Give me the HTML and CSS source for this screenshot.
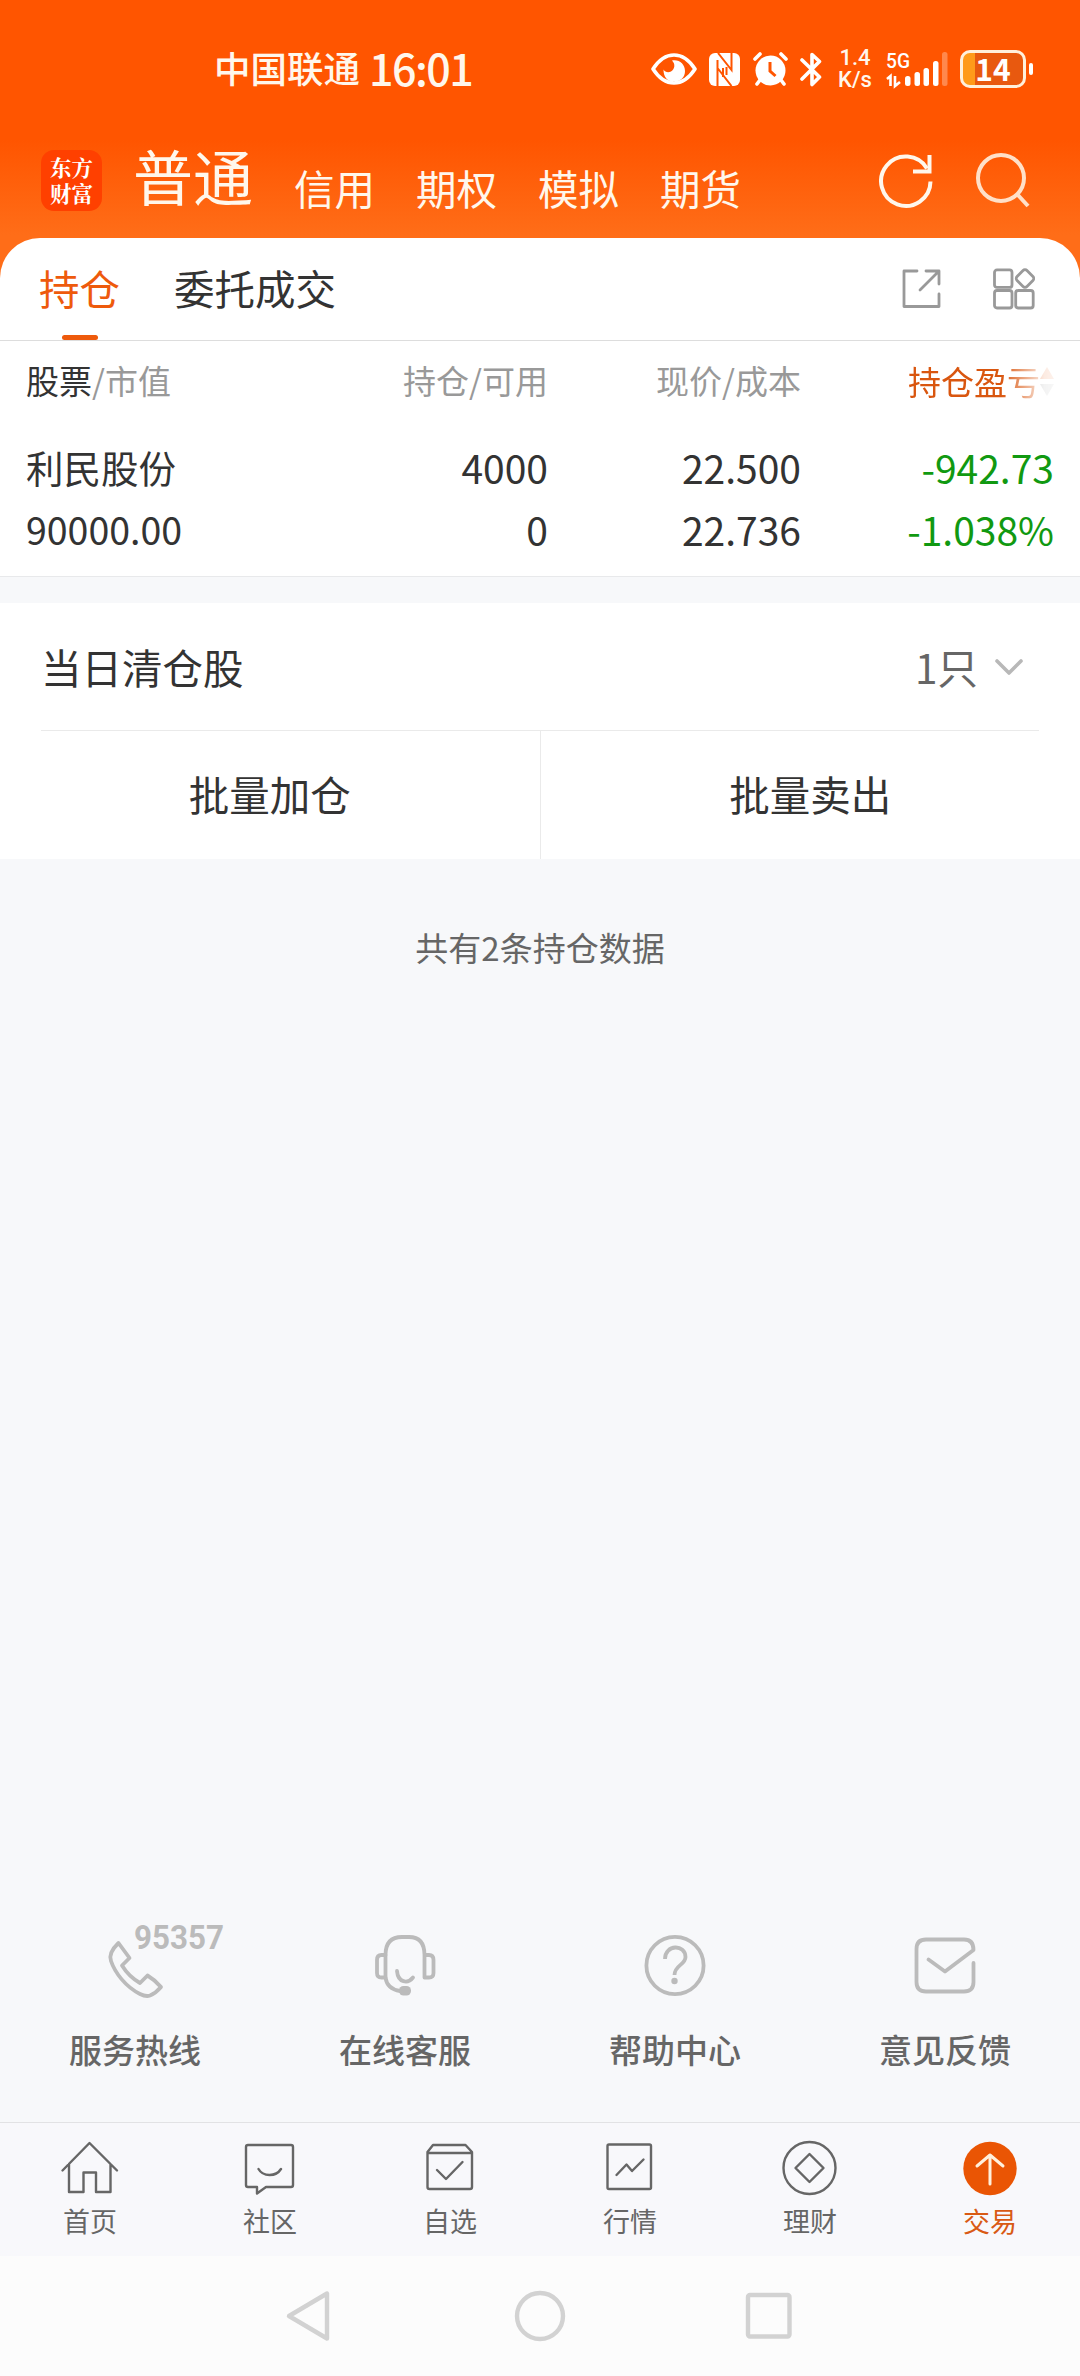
FILE: index.html
```
<!DOCTYPE html>
<html lang="zh-CN">
<head>
  <meta charset="UTF-8">
  <meta name="viewport" content="width=device-width, initial-scale=1">
  <title>东方财富 - 交易</title>
  <link rel="stylesheet" href="styles.css">
</head>
<body>
<div class="app">

  <header class="top">
    <div class="statusbar">
      <span class="carrier">中国联通</span>
      <span class="time">16:01</span>
      <div class="status-icons">
        <svg class="eye" width="46" height="32" viewBox="0 0 46 32">
          <path d="M2 16Q11 2 23 2T44 16Q35 30 23 30T2 16Z" fill="none" stroke="#fff" stroke-width="3.6" stroke-linejoin="round"/>
          <path d="M21 7.500C28 6 34 11 34 18C34 24 30 28.500 23 28.500S12.500 24 12.500 16.500C14 19 17 20 20 18.500C24 16 24.500 11 21 7.500Z" fill="#fff"/>
        </svg>
        <svg class="nfc" width="31" height="33" viewBox="0 0 31 33">
          <rect width="31" height="33" rx="6" fill="#fff"/>
          <path d="M9 0L22.500 17V0M8.500 33V7M8.500 15L22.500 33M14 15V24M17.500 14V22" fill="none" stroke="#ff5500" stroke-width="2"/>
        </svg>
        <svg class="alarm" width="35" height="34" viewBox="0 0 35 34">
          <circle cx="17.500" cy="18.500" r="15" fill="#fff"/>
          <path d="M2 7L7 2M33 7L28 2M7 28L4 32M28 28L31 32" stroke="#fff" stroke-width="3.600" stroke-linecap="round"/>
          <path d="M17 10V19L22.500 24" fill="none" stroke="#ff5500" stroke-width="3"/>
        </svg>
        <svg class="bt" width="22" height="35" viewBox="0 0 22 35">
          <path d="M2 8L19.500 25L12 32.500V2.500L19.500 9.500L2 27" fill="none" stroke="#fff" stroke-width="3.600" stroke-linejoin="round" stroke-linecap="round"/>
        </svg>
        <div class="speed"><span>1.4</span><span>K/s</span></div>
        <svg class="signal" width="62" height="38" viewBox="0 0 62 38">
          <text x="0" y="18" class="net" textLength="24" lengthAdjust="spacingAndGlyphs">5G</text>
          <path d="M1 29L4.500 26V36M9 26V36L14 32" fill="none" stroke="#fff" stroke-width="2.600"/>
          <g fill="#fff">
            <rect x="19" y="26" width="5.500" height="10" rx="2.500"/>
            <rect x="28.500" y="22" width="5.500" height="14" rx="2.500"/>
            <rect x="37.500" y="18" width="5.500" height="18" rx="2.500"/>
            <rect x="47" y="11" width="5.500" height="25" rx="2.500"/>
            <rect x="56" y="2" width="5.500" height="34" rx="2.500" opacity=".3"/>
          </g>
        </svg>
        <div class="battery"><span>14</span></div>
        <i class="battery-tip"></i>
      </div>
    </div>

    <nav class="accounts">
      <div class="logo"><span>东方</span><span>财富</span></div>
      <span class="account current">普通</span>
      <span class="account">信用</span>
      <span class="account">期权</span>
      <span class="account">模拟</span>
      <span class="account">期货</span>
      <svg class="refresh" width="54" height="56" viewBox="0 0 54 56" fill="none" stroke="#fff7ec" stroke-width="4">
        <path d="M51.500 28.500A24.700 24.700 0 1 1 48 15.500"/>
        <path d="M50.500 2V18.500H34"/>
      </svg>
      <svg class="search" width="54" height="56" viewBox="0 0 54 56" fill="none" stroke="#ffe0c8" stroke-width="4">
        <circle cx="25" cy="25" r="23"/>
        <path d="M41 41L52 53"/>
      </svg>
    </nav>
  </header>

  <main class="content">
    <section class="panel">
      <div class="tabs">
        <span class="tab active">持仓</span>
        <span class="tab">委托成交</span>
        <svg class="share" width="40" height="40" viewBox="0 0 40 40" fill="none" stroke="#999" stroke-width="2.800" stroke-linecap="round" stroke-linejoin="round">
          <path d="M15 2H2V37.500H37V25"/>
          <path d="M24 2H37V15M37 2L18 21"/>
        </svg>
        <svg class="grid" width="42" height="42" viewBox="0 0 42 42" fill="none" stroke="#999" stroke-width="2.800">
          <rect x="1.500" y="1.900" width="17.500" height="17.500" rx="2.500"/>
          <rect x="1.500" y="22.500" width="17.500" height="17.500" rx="2.500"/>
          <rect x="22.700" y="22.500" width="17.500" height="17.500" rx="2.500"/>
          <rect x="25" y="3.500" width="14" height="14" rx="2.800" transform="rotate(45 32 10.500)"/>
        </svg>
      </div>

      <div class="thead">
        <span><b>股票</b>/市值</span>
        <span>持仓/可用</span>
        <span>现价/成本</span>
        <span class="sorted">持仓盈亏<svg width="14" height="32" viewBox="0 0 14 32"><path d="M0 14L7 2L14 14Z" fill="#e8550a"/><path d="M0 19L7 31L14 19Z" fill="#999"/></svg></span>
      </div>
      <div class="row">
        <div class="name">利民股份</div>
        <div>4000</div>
        <div>22.500</div>
        <div class="down">-942.73</div>
        <div class="value">90000.00</div>
        <div>0</div>
        <div>22.736</div>
        <div class="down">-1.038%</div>
      </div>
    </section>

    <section class="closed">
      <div class="closed-head">
        <span>当日清仓股</span>
        <span class="count">1只</span>
        <svg width="28" height="16" viewBox="0 0 28 16" fill="none" stroke="#b8b8b8" stroke-width="3.600" stroke-linecap="round" stroke-linejoin="round">
          <path d="M2 2L14 14L26 2"/>
        </svg>
      </div>
      <div class="batch">
        <span>批量加仓</span>
        <span>批量卖出</span>
      </div>
    </section>

    <p class="summary">共有2条持仓数据</p>

    <div class="services">
      <div class="service">
        <svg width="120" height="76" viewBox="0 0 120 76" fill="none" stroke="#bbb" stroke-width="3.800" stroke-linejoin="round">
          <path d="M43.500 19L54.500 34L47 41.500C51 48 58 55 65 59L72.500 51.500Q80 56 86 63Q81 69 75 71.500Q71 73 65 70C51 63 40 49 36 37Q33 29 43.500 19Z"/>
          <text x="59" y="25" class="hotline" textLength="90" lengthAdjust="spacingAndGlyphs">95357</text>
        </svg>
        <span>服务热线</span>
      </div>
      <div class="service">
        <svg width="120" height="76" viewBox="0 0 120 76" fill="none" stroke="#bbb" stroke-width="3.800" stroke-linecap="round" stroke-linejoin="round">
          <path d="M40.500 53.500V31Q40.500 13 57 13H64Q79.500 13 79.500 31V53.500H84Q88.500 53.500 88.500 49V36Q88.500 31 84 31H79.500"/>
          <path d="M40.500 31H36.500Q32 31 32 36V49Q32 53.500 36.500 53.500H40.500Q42 65 55 67"/>
          <path d="M52 47C53 59 63 60 68 53.500"/>
          <rect x="54" y="62" width="12" height="9.500" rx="4.500" fill="#bbb" stroke="none"/>
        </svg>
        <span>在线客服</span>
      </div>
      <div class="service">
        <svg width="120" height="76" viewBox="0 0 120 76" fill="none" stroke="#bbb" stroke-width="3.800">
          <circle cx="60" cy="41.500" r="28.600"/>
          <path d="M50 35C50 20 70.500 20 70.500 33C70.500 41 59.500 41 59.500 51"/>
          <circle cx="59.500" cy="57" r="3.200" fill="#bbb" stroke="none"/>
        </svg>
        <span>帮助中心</span>
      </div>
      <div class="service">
        <svg width="120" height="76" viewBox="0 0 120 76" fill="none" stroke="#bbb" stroke-width="3.800" stroke-linecap="round" stroke-linejoin="round">
          <path d="M88.500 39V58Q88.500 67.500 79 67.500H41Q31.500 67.500 31.500 58V25Q31.500 15.500 41 15.500H79Q88.500 15.500 88.500 26L60 47.500L43.500 35.500"/>
        </svg>
        <span>意见反馈</span>
      </div>
    </div>
  </main>

  <nav class="tabbar">
    <div class="item">
      <svg width="60" height="60" viewBox="0 0 60 60"><path d="M2.500 31.500L29.500 4L57 31.500M9 25V53H23.500V33.500H36V53H50.500V25"/></svg>
      <span>首页</span>
    </div>
    <div class="item">
      <svg width="60" height="60" viewBox="0 0 60 60"><path d="M8 6H51Q53 6 53 8V46Q53 48 51 48H26L17 54.500V48H8Q6 48 6 46V8Q6 6 8 6ZM18.500 30C23 38 36 38 41 30"/></svg>
      <span>社区</span>
    </div>
    <div class="item">
      <svg width="60" height="60" viewBox="0 0 60 60"><path d="M7.500 13L13 6H45.500L52 13V48Q52 50 50 50H9.500Q7.500 50 7.500 48ZM7.500 14H52M17 31L26 40L42.500 23"/></svg>
      <span>自选</span>
    </div>
    <div class="item">
      <svg width="60" height="60" viewBox="0 0 60 60"><rect x="7.500" y="5.500" width="43.500" height="44.500" rx="1.500"/><path d="M16.500 36L26.500 25.500L32 32L43.500 20.500"/></svg>
      <span>行情</span>
    </div>
    <div class="item">
      <svg width="60" height="60" viewBox="0 0 60 60"><circle cx="29.500" cy="29" r="26"/><path d="M29.500 15L43.500 29L29.500 43L15.500 29Z"/></svg>
      <span>理财</span>
    </div>
    <div class="item active">
      <svg width="60" height="60" viewBox="0 0 60 60"><circle class="disc" cx="30" cy="29.500" r="26.700"/><path class="arrow" d="M30 45V16M17 27L30 16L43 27"/></svg>
      <span>交易</span>
    </div>
  </nav>

  <div class="sysnav">
    <svg width="52" height="52" viewBox="0 0 52 52"><path d="M4 26L42 3.500V48.500Z"/></svg>
    <svg width="52" height="52" viewBox="0 0 52 52"><circle cx="26" cy="26" r="23"/></svg>
    <svg width="52" height="52" viewBox="0 0 52 52"><rect x="5" y="5" width="41.500" height="41.500" rx="2"/></svg>
  </div>

</div>
</body>
</html>
```
FILE: styles.css
```
* {
  box-sizing: border-box;
}

body {
  margin: 0;
  background: #f7f8fa;
  color: #333;
  font-family: "Noto Sans CJK SC", "Noto Sans", sans-serif;
}

svg {
  display: block;
  flex: none;
}

.app {
  width: 1080px;
  height: 2376px;
  display: flex;
  flex-direction: column;
  overflow: hidden;
}

/* orange header, runs on behind the rounded panel corners */
.top {
  height: 288px;
  flex: none;
  background: linear-gradient(#ff5500 0, #ff5500 140px, #ff6d18 235px, #ff6d18 100%);
  color: #fff7ec;
}

.statusbar {
  height: 138px;
  display: flex;
  align-items: center;
  padding-left: 214px;
}

.carrier {
  font-size: 36.5px;
  font-weight: 500;
  line-height: 50px;
  margin-top: -3px;
}

.time {
  width: 112px;
  margin-left: 9px;
  margin-top: -4px;
  font-size: 43px;
  font-weight: 500;
  line-height: 50px;
  letter-spacing: -1.5px;
}

.status-icons {
  display: flex;
  align-items: center;
  margin-left: 170px;
}

.speed,
.battery,
.battery-tip {
  flex: none;
}

.nfc {
  margin-left: 12px;
}

.alarm {
  margin-left: 13px;
}

.bt {
  margin-left: 12px;
}

.speed {
  width: 38px;
  margin-left: 14px;
  display: flex;
  flex-direction: column;
  align-items: center;
  font-family: Roboto, sans-serif;
  font-size: 22px;
  font-weight: 500;
  line-height: 22px;
}

.signal {
  margin-left: 12px;
  overflow: visible;
}

.net {
  font-family: Roboto, sans-serif;
  font-size: 21px;
  font-weight: 500;
  fill: #fff;
}

.battery {
  width: 66px;
  height: 38px;
  margin-left: 12px;
  border: 3px solid #fff0dc;
  border-radius: 10px;
  background: linear-gradient(90deg, #ff9a1a 12px, #e8590f 12px);
  text-align: center;
  font-size: 30px;
  font-weight: 700;
  line-height: 30px;
  color: #fff;
}

.battery-tip {
  width: 4px;
  height: 12px;
  margin-left: 3px;
  border-radius: 2px;
  background: #fff;
}

.accounts {
  height: 100px;
  display: flex;
  align-items: flex-start;
  padding-left: 41px;
}

.logo {
  width: 61px;
  height: 61px;
  margin-top: 12px;
  padding-top: 4px;
  border-radius: 13px;
  background: #ff4000;
  color: #fff;
  display: flex;
  flex-direction: column;
  align-items: center;
  font-family: "Noto Serif CJK SC", "Noto Sans CJK SC", serif;
  font-size: 21.5px;
  font-weight: 700;
  line-height: 26px;
}

.account {
  margin-left: 41px;
  margin-top: 20px;
  font-size: 40.5px;
  line-height: 60px;
}

.account.current {
  margin-left: 31px;
  margin-top: 1px;
  font-size: 60px;
  line-height: 72px;
}

.refresh {
  margin-left: 138px;
  margin-top: 15px;
}

.search {
  margin-left: 43px;
  margin-top: 15px;
}

.content {
  flex: 1;
  display: flex;
  flex-direction: column;
  margin-top: -50px;
}

.panel {
  height: 339px;
  background: #fff;
  border-bottom: 1px solid #e8e9eb;
  border-radius: 40px 40px 0 0;
}

.tabs {
  height: 103px;
  display: flex;
  align-items: center;
  padding-left: 39px;
  border-bottom: 1px solid #ddd;
}

.tab {
  height: 102px;
  font-size: 40.5px;
  line-height: 99px;
}

.tab + .tab {
  margin-left: 54px;
}

.tab.active {
  color: #ee5a0c;
  display: flex;
  flex-direction: column;
  align-items: center;
}

.tab.active::after {
  content: "";
  width: 36px;
  height: 5px;
  margin-top: -2px;
  border-radius: 3px;
  background: #ee5a0c;
}

.share {
  margin-left: auto;
}

.grid {
  margin-left: 51px;
  margin-right: 45px;
}

.thead,
.row {
  display: grid;
  grid-template-columns: 1fr 253px 253px 253px;
  padding: 0 26px;
  text-align: right;
}

.thead {
  height: 90px;
  font-size: 33px;
  line-height: 79px;
  color: #999;
}

.thead b {
  font-weight: 400;
  color: #333;
}

.thead span:first-child {
  text-align: left;
}

.thead .sorted {
  display: flex;
  justify-content: flex-end;
  align-items: center;
  height: 80px;
  color: #d9560f;
  -webkit-mask-image: linear-gradient(90deg, #000 200px, rgba(0, 0, 0, .12) 243px, rgba(0, 0, 0, .08));
  mask-image: linear-gradient(90deg, #000 200px, rgba(0, 0, 0, .12) 243px, rgba(0, 0, 0, .08));
}

.row {
  grid-auto-rows: 62px;
  font-size: 39px;
  line-height: 72px;
}

.row .name,
.row .value {
  text-align: left;
  font-size: 37.5px;
}

.row .down {
  color: #119911;
}

.closed {
  margin-top: 26px;
  height: 256px;
  background: #fff;
  font-size: 40.5px;
}

.closed-head {
  height: 128px;
  margin: 0 41px;
  display: flex;
  align-items: center;
  border-bottom: 1px solid #eaeaea;
  line-height: 122px;
}

.count {
  margin-left: auto;
  color: #666;
}

.closed-head svg {
  margin-left: 17px;
  margin-right: 16px;
}

.batch {
  height: 128px;
  display: flex;
  text-align: center;
  line-height: 125px;
}

.batch span {
  flex: 1;
}

.batch span + span {
  border-left: 1px solid #eaeaea;
}

.summary {
  margin: 61px 0 0;
  text-align: center;
  font-size: 33px;
  line-height: 54px;
  color: #666;
}

.services {
  display: flex;
  margin-top: auto;
  height: 198px;
}

.service {
  flex: 1;
  display: flex;
  flex-direction: column;
  align-items: center;
  font-size: 33px;
  font-weight: 500;
  line-height: 50px;
  color: #666;
}

.service svg {
  overflow: visible;
  margin-bottom: 24px;
}

.hotline {
  font-family: Roboto, sans-serif;
  font-size: 33px;
  font-weight: 700;
  fill: #bbb;
  stroke: none;
}

.tabbar {
  height: 134px;
  flex: none;
  display: flex;
  border-top: 1px solid #e2e2e4;
  background: #f8f8fb;
}

.item {
  flex: 1;
  display: flex;
  flex-direction: column;
  align-items: center;
  padding-top: 16px;
  font-size: 27px;
  line-height: 44px;
  color: #666;
}

.item svg {
  fill: none;
  stroke: #666;
  stroke-width: 2.4;
  stroke-linecap: round;
  stroke-linejoin: round;
}

.item.active {
  color: #d95a14;
}

.item .disc {
  fill: #ea5504;
  stroke: none;
}

.item .arrow {
  stroke: #fff0dc;
  stroke-width: 3;
}

.sysnav {
  height: 120px;
  flex: none;
  display: flex;
  justify-content: center;
  align-items: center;
  gap: 177px;
  background: #fcfcfc;
}

.sysnav svg {
  fill: none;
  stroke: #d2d2d2;
  stroke-width: 4.4;
  stroke-linejoin: round;
}
```
